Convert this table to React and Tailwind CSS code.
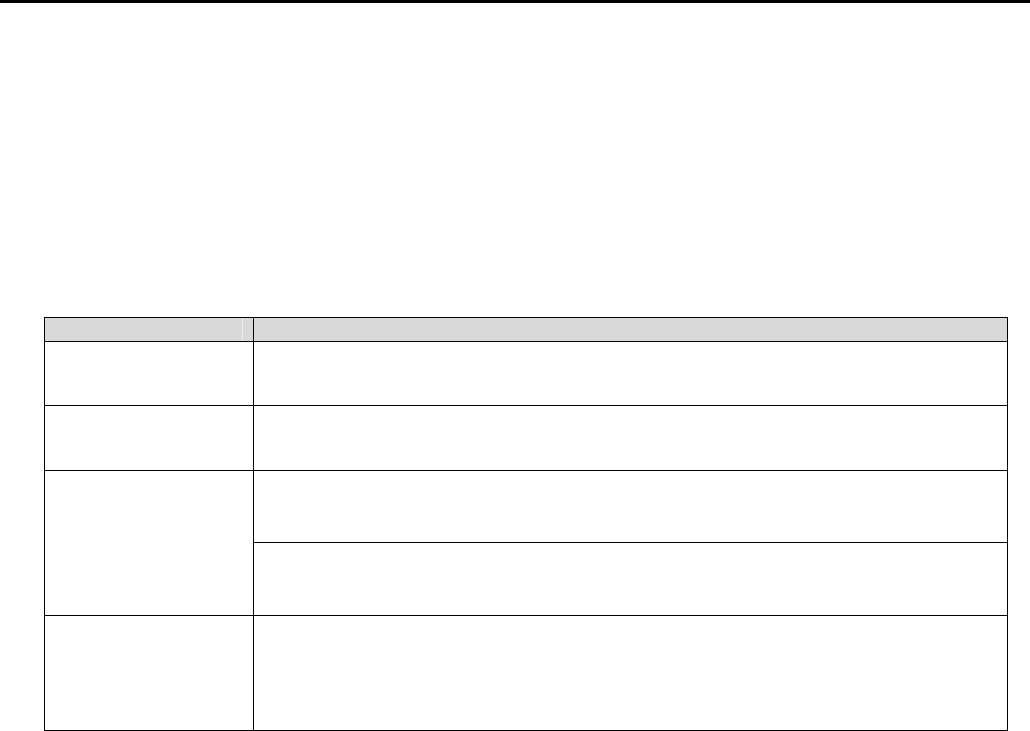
export default function App() {
  return (
    <div className="w-[1030px] h-[731px] bg-white overflow-hidden" style={{ fontFamily: '"Liberation Sans", Arial, sans-serif' }}>
      <div className="h-[3px] w-full bg-black" />
      <div className="mt-[314px] ml-[44px] w-[964px] border border-black">
        <div className="flex h-[24px] bg-[#d9d9d9] border-b border-black">
          <div className="w-[209px] flex border-r border-black">
            <div className="w-[197px]" />
            <div className="w-px bg-[#ececec]" />
          </div>
          <div className="flex-1" />
        </div>
        <div className="flex h-[64px] border-b border-black">
          <div className="w-[209px] border-r border-black" />
          <div className="flex-1" />
        </div>
        <div className="flex h-[65px] border-b border-black">
          <div className="w-[209px] border-r border-black" />
          <div className="flex-1" />
        </div>
        <div className="flex h-[145px] border-b border-black">
          <div className="w-[209px] border-r border-black" />
          <div className="flex-1 flex flex-col">
            <div className="h-[72px] border-b border-black" />
            <div className="flex-1" />
          </div>
        </div>
        <div className="flex h-[114px]">
          <div className="w-[209px] border-r border-black" />
          <div className="flex-1" />
        </div>
      </div>
    </div>
  );
}
